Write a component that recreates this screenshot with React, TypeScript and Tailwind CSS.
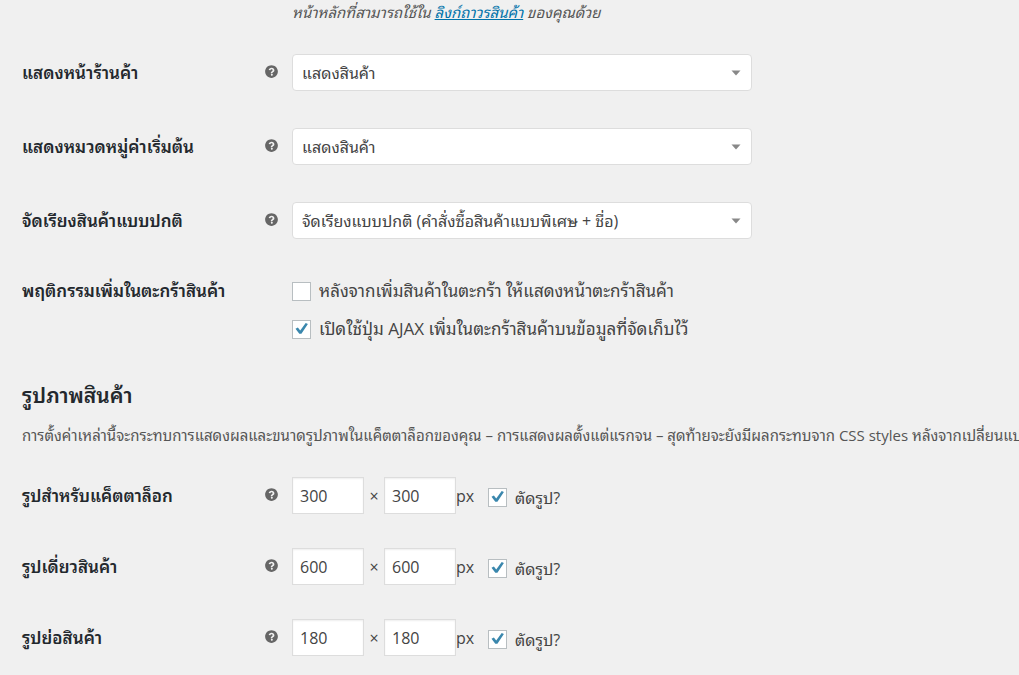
import React from "react";

function HelpTip({ about }: { about: string }) {
  return (
    <button type="button" aria-label={about} className="mb-0.5 block size-[17px] shrink-0 text-[#666]">
      <svg viewBox="0 0 20 20" className="size-[17px]" fill="currentColor" aria-hidden="true">
        <path d="M17.5 10c0 4.14-3.36 7.5-7.5 7.5S2.500 14.140 2.500 10 5.860 2.500 10 2.500s7.500 3.360 7.500 7.500zm-6.300 1.480c.08-.16.18-.26.38-.4l.66-.48c.56-.42 1.160-1.100 1.160-2.180 0-1.780-1.440-2.820-3.260-2.820-1.840 0-3.140 1.060-3.380 2.740l1.900.3c.14-.86.62-1.340 1.360-1.340.76 0 1.280.46 1.280 1.120 0 .56-.26.86-.84 1.260-.9.64-1.300 1.060-1.300 2.060v.36h1.640c0-.28.02-.46.400-.62zm-.82 3.420c.66 0 1.160-.5 1.160-1.120s-.5-1.120-1.160-1.120c-.64 0-1.140.5-1.140 1.120s.5 1.120 1.140 1.120z" />
      </svg>
    </button>
  );
}

function Tick({ id, checked = false }: { id: string; checked?: boolean }) {
  return (
    <span className="relative block size-[19px] shrink-0">
      <input
        id={id}
        type="checkbox"
        defaultChecked={checked}
        className="peer block size-[19px] appearance-none border border-[#b8bec1] bg-white"
      />
      <svg
        viewBox="0 0 19 19"
        className="pointer-events-none absolute inset-0 hidden size-[19px] peer-checked:block"
        aria-hidden="true"
      >
        <path d="M3.500 8.800L5.900 7.600l2.300 3L13.700 3l2.200.9L9.400 13.800H7.300z" fill="#3a87ad" />
      </svg>
    </span>
  );
}

const selects = [
  { id: "shop-page", label: "แสดงหน้าร้านค้า", value: "แสดงสินค้า" },
  { id: "category", label: "แสดงหมวดหมู่ค่าเริ่มต้น", value: "แสดงสินค้า" },
  { id: "sorting", label: "จัดเรียงสินค้าแบบปกติ", value: "จัดเรียงแบบปกติ (คำสั่งซื้อสินค้าแบบพิเศษ + ชื่อ)" },
];

const sizes = [
  { id: "catalog", label: "รูปสำหรับแค็ตตาล็อก", value: "300" },
  { id: "single", label: "รูปเดี่ยวสินค้า", value: "600" },
  { id: "thumbnail", label: "รูปย่อสินค้า", value: "180" },
];

const rowLabel = "w-[241px] shrink-0 text-[17px] font-semibold text-[#23282d]";

const numberBox =
  "h-[37px] w-[72px] border border-[#ddd] bg-white pr-2 pl-[7px] text-base text-[#444] shadow-[inset_0_1px_2px_rgba(0,0,0,0.07)]";

export default function App() {
  return (
    <main className="min-h-screen overflow-hidden bg-[#f0f0f0] pb-4 pl-[22px] font-['Open_Sans','Noto_Sans_Thai_Looped','Loma','Waree','Noto_Sans_Thai','Noto_Sans',sans-serif] text-base text-[#444]">
      <p className="pl-[270px] text-[15px] leading-6 text-[#555] italic">
        หน้าหลักที่สามารถใช้ใน{" "}
        <a href="#permalinks" className="text-[#0073aa] underline">ลิงก์ถาวรสินค้า</a> ของคุณด้วย
      </p>

      <div className="mt-[30px] flex flex-col gap-[37px]">
        {selects.map((row) => (
          <div key={row.id} className="flex h-[37px] items-center">
            <label htmlFor={row.id} className={rowLabel}>{row.label}</label>
            <HelpTip about={row.label} />
            <div className="relative ml-3 w-[460px]">
              <select
                id={row.id}
                className="block h-[37px] w-full appearance-none rounded-[4px] border border-[#ddd] bg-white pr-8 pl-[9px] text-base text-[#444]"
              >
                <option>{row.value}</option>
              </select>
              <svg viewBox="0 0 10 6" className="pointer-events-none absolute top-4 right-[11px] h-1.5 w-2.5" aria-hidden="true">
                <path d="M0.500 0.500h9L5 5.500z" fill="#888" />
              </svg>
            </div>
          </div>
        ))}
      </div>

      <fieldset className="mt-[38px] flex">
        <legend className="float-left w-[270px] text-[17px] leading-7 font-semibold text-[#23282d]">พฤติกรรมเพิ่มในตะกร้าสินค้า</legend>
        <div className="flex flex-col gap-2.5 text-[17px]">
          <div className="flex h-7 items-center gap-2">
            <Tick id="redirect" />
            <label htmlFor="redirect">หลังจากเพิ่มสินค้าในตะกร้า ให้แสดงหน้าตะกร้าสินค้า</label>
          </div>
          <div className="flex h-7 items-center gap-2">
            <Tick id="ajax" checked />
            <label htmlFor="ajax">เปิดใช้ปุ่ม AJAX เพิ่มในตะกร้าสินค้าบนข้อมูลที่จัดเก็บไว้</label>
          </div>
        </div>
      </fieldset>

      <h2 className="mt-9 text-[21px] leading-8 font-semibold text-[#23282d]">รูปภาพสินค้า</h2>
      <p className="mt-3 text-[15px] leading-6 whitespace-nowrap text-[#555]">
        การตั้งค่าเหล่านี้จะกระทบการแสดงผลและขนาดรูปภาพในแค็ตตาล็อกของคุณ – การแสดงผลตั้งแต่แรกจน – สุดท้ายจะยังมีผลกระทบจาก CSS styles หลังจากเปลี่ยนแปลง
      </p>

      <div className="mt-[30px] flex flex-col gap-[34px]">
        {sizes.map((row) => (
          <div key={row.id} className="flex h-[37px] items-center">
            <label htmlFor={row.id} className={rowLabel}>{row.label}</label>
            <HelpTip about={row.label} />
            <input id={row.id} defaultValue={row.value} className={`ml-3 ${numberBox}`} />
            <span className="w-5 text-center">×</span>
            <input aria-label={`${row.label} 2`} defaultValue={row.value} className={numberBox} />
            <span className="w-8">px</span>
            <div className="flex items-center gap-2 pt-1">
              <Tick id={`${row.id}-crop`} checked />
              <label htmlFor={`${row.id}-crop`}>ตัดรูป?</label>
            </div>
          </div>
        ))}
      </div>
    </main>
  );
}
